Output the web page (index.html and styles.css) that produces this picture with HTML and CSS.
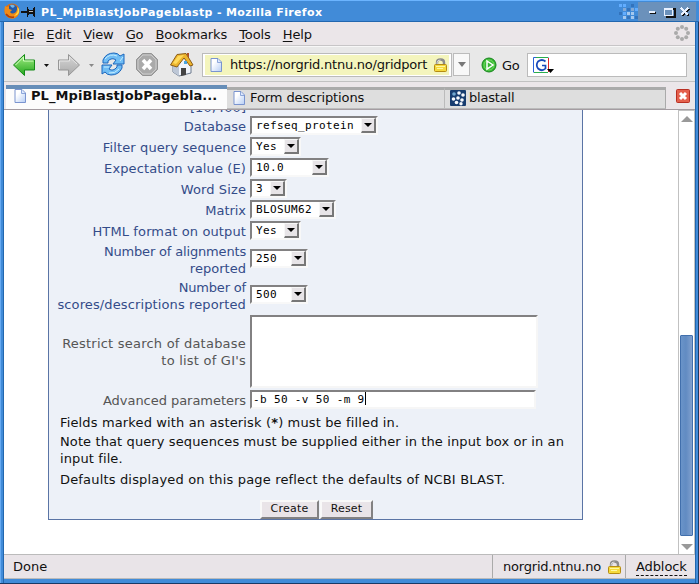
FILE: index.html
```html
<!DOCTYPE html>
<html lang="en">
<head>
<meta charset="utf-8">
<title>PL_MpiBlastJobPageblastp - Mozilla Firefox</title>
<link rel="stylesheet" href="styles.css">
</head>
<body>
<svg width="0" height="0" class="defs">
  <defs>
    <linearGradient id="green" x2="0" y2="1"><stop stop-color="#a5ee86"/><stop offset="1" stop-color="#22a51c"/></linearGradient>
    <linearGradient id="grey" x2="0" y2="1"><stop stop-color="#d6d6d6"/><stop offset="1" stop-color="#aaa"/></linearGradient>
    <linearGradient id="sheet" x2="1" y2="1"><stop offset=".3" stop-color="#fff"/><stop offset="1" stop-color="#b5cdf5"/></linearGradient>
    <symbol id="page" viewBox="0 0 12 14"><path d="M1 .5H8L11.5 4V13.5H1Z" fill="url(#sheet)" stroke="#7a94cf"/><path d="M7.5 1V4.5H11" fill="#dce8ff" stroke="#8da7da"/></symbol>
    <symbol id="lock" viewBox="0 0 13 14"><path d="M3 7V4.5Q3 1.5 6.5 1.5T10 4.5V7" fill="none" stroke="#8c8c8c" stroke-width="2.4"/><path d="M3.2 6V4.5Q3.2 2 6.5 2" fill="none" stroke="#ddd"/><rect x=".5" y="6.5" width="12" height="7" rx="1" fill="#f5da3c" stroke="#b58b12"/><path d="M2 8.500H11M3 10.500H9" stroke="#fff8a0"/></symbol>
  </defs>
</svg>
<div class="window">
  <header class="titlebar">
    <svg class="fox" width="16" height="16" viewBox="0 0 16 16"><circle cx="8" cy="8" r="7.500" fill="#e36e0c"/><circle cx="8.500" cy="6.500" r="5" fill="#245aa9"/><path d="M6 2Q9 1 11 3L9 5 7 4Z" fill="#72b5e8"/><path d="M1 3L3 4 5 3 5 6 8 7 6 9Q8 12 12 9L14 4Q17 11 11 15 5 17 1 11Q0 7 1 3" fill="#f28b16"/><path d="M13 4Q15 8 12 11L10 13Q16 12 15 6Z" fill="#ffdc45"/><path d="M2 11Q5 15 10 14" fill="none" stroke="#ae3e0b" stroke-width="1.500"/></svg>
    <svg class="pin" width="14" height="10" viewBox="0 0 14 10" shape-rendering="crispEdges"><path d="M0 4H6V6H0ZM6 0H7V10H6ZM7 2H8V8H7ZM8 3H12V7H8ZM12 1H13V9H12ZM13 0H14V10H13Z" fill="#111"/><path d="M8 4H12V5H8" fill="#bbb"/></svg>
    <span class="title">PL_MpiBlastJobPageblastp - Mozilla Firefox</span>
    <svg class="controls" width="80" height="20" viewBox="0 0 80 20" shape-rendering="crispEdges"><path d="M22 1H80V20H22Z" fill="#6b91bb"/><path d="M3 3h3v3h-3zM7 3h3v3h-3zM7 11h3v3h-3zM19 7h3v3h-3z" fill="#62adff"/><path d="M11 7h3v3h-3zM15 3h3v3h-3zM11 15h3v3h-3zM3 11h3v3h-3zM19 15h3v3h-3z" fill="#3373bc"/><path d="M7 15h3v3h-3zM11 11h3v3h-3zM15 11h3v3h-3zM15 15h3v3h-3z" fill="#a5c8ee"/><path d="M7 7h3v3h-3zM15 7h3v3h-3z" fill="#84a9d5"/><path d="M34 12H40M50 8H59V16H50" fill="none" stroke="#111" stroke-width="2"/><path d="M33 11H39" stroke="#e8f1ff" stroke-width="2"/><path d="M48.500 7.500H56.500V14.500H48.500ZM48 8.500H57" fill="none" stroke="#e8f1ff"/><path d="M66 8L73 15M73 8L66 15" fill="none" stroke="#111" stroke-width="2"/><path d="M65 7L72 14M72 7L65 14" fill="none" stroke="#e8f1ff" stroke-width="2"/></svg>
  </header>
  <nav class="menu">
    <span><u>F</u>ile</span><span><u>E</u>dit</span><span><u>V</u>iew</span><span><u>G</u>o</span><span><u>B</u>ookmarks</span><span><u>T</u>ools</span><span><u>H</u>elp</span>
    <svg class="throbber" width="18" height="18" viewBox="0 0 18 18"><g fill="#aaa"><circle cx="9" cy="3" r="2"/><circle cx="13.200" cy="4.800" r="2"/><circle cx="15" cy="9" r="2"/><circle cx="13.200" cy="13.200" r="2"/><circle cx="9" cy="15" r="2"/><circle cx="4.800" cy="13.200" r="2"/><circle cx="3" cy="9" r="2"/><circle cx="4.800" cy="4.800" r="2"/></g></svg>
  </nav>
  <div class="toolbar">
    <svg class="icons" width="198" height="36" viewBox="4 46 198 36">
      <path d="M13.500 65L24.500 54.500V60H34.500V70H24.500V75.500Z" fill="url(#green)" stroke="#168b18"/><path d="M15.500 65L23.500 57V61H33.500" fill="none" stroke="#d4ffc2"/>
      <path d="M44 64H49L46.500 67Z" fill="#111"/>
      <path d="M79.500 65L68.500 54.500V60H58.500V70H68.500V75.500Z" fill="url(#grey)" stroke="#969696"/><path d="M59.500 69V61H69.500V57L77 64" fill="none" stroke="#e5e5e5"/>
      <path d="M89 64H94L91.500 67Z" fill="#888"/>
      <path d="M103 63V60Q106 53 114 53Q118 53 120 56L124 54V64H113L116 60Q112 57 108 61V63Z" fill="#70bdf4" stroke="#1c67bd"/><path d="M122 65V68Q119 75 111 75Q107 75 105 72L102 74V65H112L109 69Q113 72 117 67V65Z" fill="#70bdf4" stroke="#1c67bd"/><path d="M105 59Q110 53 117 56M120 61L123 57M104 67H109M109 73Q115 74 119 69" fill="none" stroke="#c7edff"/>
      <path d="M142.500 53.500H151.500L157.500 59.500V69.500L151.500 75.500H142.500L136.500 69.500V59.500Z" fill="#aaa" stroke="#939393"/><path d="M143 55H151L156 60V69L151 74H143L138 69V60Z" fill="none" stroke="#ccc"/><path d="M143 60L151 69M151 60L143 69" stroke="#fff" stroke-width="3.500"/>
      <path d="M173 64L183 56 191 65V73L179 76 173 72Z" fill="#f1f5fc" stroke="#6b788c"/><path d="M173 64L179 66V76L173 72Z" fill="#bdc7d6"/><path d="M170.500 65L177 54.500 186 53.500 193 65 190 66 184 58 177 67Z" fill="#edb52d" stroke="#8b5c17"/><path d="M173 63L178 56 184 55 176 64Z" fill="#ffdb5e"/><path d="M181 68H186V75L181 76Z" fill="#444"/><path d="M184 61H187V64H184Z" fill="#4aa5e0"/><path d="M187 55V53H189V58Z" fill="#af5225"/>
    </svg>
    <div class="address"><div class="url"><svg width="12" height="14"><use href="#page"/></svg><span>https://norgrid.ntnu.no/gridport</span><svg class="urllock" width="13" height="14"><use href="#lock"/></svg></div></div>
    <div class="drop"><i></i></div>
    <svg class="goicon" width="16" height="16" viewBox="0 0 16 16"><circle cx="8" cy="8" r="7" fill="#38b936" stroke="#16851b"/><circle cx="8" cy="8" r="5" fill="none" stroke="#75da60"/><path d="M6 4L12 8 6 12Z" fill="#38b936" stroke="#fff" stroke-width="1.500"/></svg>
    <span class="go">Go</span>
    <div class="search"><svg width="22" height="17" viewBox="0 0 22 17"><path d="M.5 15.500V.5H15.500" fill="none" stroke="#2b62d7"/><path d="M3 .5H15M1 15.500H15" stroke="#2bad4d"/><path d="M15.500 1V15" stroke="#e02626"/><path d="M12.500 4.500Q9 1.500 5 4.500 2.500 8 5 11.500 9 15 12.500 11.500V8.500H9" fill="none" stroke="#1849ba" stroke-width="1.700"/><path d="M14 12H21L17.500 16Z" fill="#000"/></svg></div>
  </div>
  <div class="tabs">
    <div class="tab active"><svg width="12" height="14"><use href="#page"/></svg><b>PL_MpiBlastJobPagebla...</b></div>
    <div class="tab forms"><svg width="12" height="14"><use href="#page"/></svg><span>Form descriptions</span></div>
    <div class="tab blast"><svg width="16" height="16" viewBox="0 0 16 16"><rect width="16" height="16" rx="1" fill="#173d70"/><g fill="#f6f9fd"><circle cx="9" cy="3" r="1.800"/><circle cx="13" cy="5" r="1.800"/><circle cx="3.500" cy="9" r="1.800"/><circle cx="8" cy="8" r="1.800"/><circle cx="12" cy="10" r="1.800"/><circle cx="6.500" cy="12.500" r="1.800"/><circle cx="11" cy="13.800" r="1.700"/></g><circle cx="4" cy="4" r="1.800" fill="#71a8cf"/></svg><span>blastall</span></div>
    <svg class="close" width="14" height="14" viewBox="0 0 14 14"><rect x=".5" y=".5" width="13" height="13" rx="1" fill="#e45f4c" stroke="#b92e22"/><path d="M4 4L10 10M10 4L4 10" stroke="#fff" stroke-width="3"/></svg>
  </div>
  <main class="content">
    <section class="panel">
      <div class="range"><span>[10,400]</span></div>
      <div class="row"><label class="s0">Database</label><div class="select w128">refseq_protein<i></i></div></div>
      <div class="row"><label class="s1">Filter query sequence</label><div class="select w50">Yes<i></i></div></div>
      <div class="row"><label class="s1">Expectation value (E)</label><div class="select w79">10.0<i></i></div></div>
      <div class="row"><label class="s1">Word Size</label><div class="select w37">3<i></i></div></div>
      <div class="row"><label class="s2">Matrix</label><div class="select w86">BLOSUM62<i></i></div></div>
      <div class="row"><label class="s1">HTML format on output</label><div class="select w50">Yes<i></i></div></div>
      <div class="row double"><label><span class="s3">Number of alignments</span><br><span class="s0">reported</span></label><div class="select w58">250<i></i></div></div>
      <div class="row double"><label><span class="s3">Number of</span><br><span class="s1">scores/descriptions reported</span></label><div class="select w58">500<i></i></div></div>
      <div class="row area optional"><label><span class="s4">Restrict search of database</span><br><span class="s4">to list of GI's</span></label><div class="textarea"></div></div>
      <div class="row advanced optional"><label class="s2">Advanced parameters</label><div class="input">-b 50 -v 50 -m 9<em></em></div></div>
      <p class="fields">Fields marked with an asterisk (<b>*</b>) must be filled in.</p>
      <p class="note">Note that query sequences must be supplied either in the input box or in an<br>input file.</p>
      <p class="defaults">Defaults displayed on this page reflect the defaults of NCBI BLAST.</p>
      <div class="buttons"><div class="button create">Create</div><div class="button reset">Reset</div></div>
    </section>
    <aside class="scroll"><i class="up"></i><div class="thumb"></div><i class="down"></i></aside>
  </main>
  <footer><span class="done">Done</span><div class="host"><span>norgrid.ntnu.no</span><svg width="13" height="14"><use href="#lock"/></svg></div><div class="adblock"><span>Adblock</span></div></footer>
</div>
</body>
</html>
```
FILE: styles.css
```css
* { box-sizing: border-box; }
body { margin: 0; width: 699px; height: 584px; overflow: hidden; font: 13px/17px "DejaVu Sans", sans-serif; color: #111; }
.defs { position: absolute; }
svg { display: block; flex: none; }
.window { height: 584px; padding: 0 4px 5px; border: 0; background: linear-gradient(90deg, #66aaf2 0 1px, #418bd8 1px 3px, #2267af 3px 4px, #418bd8 4px 695px, #2267af 695px 696px, #418bd8 696px 698px, #193965 698px); display: flex; flex-direction: column; box-shadow: inset 0 -1px #193965; }
.titlebar { height: 22px; margin: 0 -4px; padding-left: 4px; display: flex; align-items: center; flex: none; background: #418bd8; border-top: 1px solid #6bb4ff; border-bottom: 1px solid #2267af; color: #fff; }
.pin { margin: 2px 0 0 1px; }
.title { font-size: 11px; font-weight: bold; margin: 3px 0 0 6px; letter-spacing: .35px; white-space: nowrap; }
.controls { margin-left: auto; margin-right: 3px; }
.menu { height: 24px; flex: none; display: flex; align-items: center; gap: 12px; padding-left: 9px; padding-top: 1px; background: #ebe6e9; border-bottom: 1px solid #c7c5c7; letter-spacing: -.1px; }
.menu u { text-underline-offset: 2px; }
.throbber { margin: -2px 4px 0 auto; }
.toolbar { height: 36px; flex: none; display: flex; align-items: center; background: #e8e8e8; border-bottom: 1px solid #c1c1c1; border-top: 1px solid #f7f7f7; }
.address { width: 250px; height: 24px; flex: none; border: 1px solid #bbb; background: white; padding: 1px 2px; margin-top: 1px; }
.url { height: 20px; background: #f4f5bd; display: flex; align-items: center; padding: 0 2px 0 5px; }
.url span { margin-left: 8px; white-space: nowrap; letter-spacing: -.22px; width: 198px; }
.urllock { margin-left: auto; }
.drop { width: 17px; height: 23px; border: 1px solid #bbb; background: #f8f8f8; margin: 1px 0 0 1px; display: grid; place-items: center; }
.drop i { border: 4.500px solid transparent; border-top: 5px solid #777; border-bottom: 0; }
.goicon { margin-left: 11px; margin-top: 2px; }
.go { margin-left: 5px; margin-top: 2px; letter-spacing: -.3px; }
.search { margin: 1px 8px 0 auto; width: 160px; height: 24px; background: white; border: 1px solid #bbb; padding: 3px 5px; }
.tabs { height: 28px; flex: none; background: #ebe6e9; border-bottom: 1px solid #a49ca1; padding: 3px 0 0 2px; display: flex; }
.tab { display: flex; align-items: center; white-space: nowrap; border-bottom: 1px solid #bbb; background: #dedede; height: 22px; }
.active { width: 221px; height: 24px; border: 0; border-top: 4px solid #668db8; background: #fcfcfc; padding-left: 8px; }
.active svg { margin-top: -4px; }
.active b { margin-left: 5px; font-size: 13px; margin-top: -7px; letter-spacing: .07px; }
.forms, .blast { margin-top: 2px; border-top: 3px solid #aaa; padding-left: 6px; }
.tab svg { position: relative; top: -1px; }
.forms { width: 218px; border-right: 1px solid #bbb; }
.forms span { margin: -4px 0 0 5px; letter-spacing: -.1px; }
.blast { width: 221px; padding-left: 5px; border-right: 1px solid #aaa; }
.blast span { margin: -4px 0 0 3px; letter-spacing: -.2px; }
.close { margin: 4px 0 0 10px; }
.content { height: 444px; flex: none; background: white; display: flex; overflow: hidden; }
.panel { width: 535px; height: 410px; margin-left: 44px; border: 1px solid #5a74a5; border-top: 0; background: #edf1f8; letter-spacing: .4px; }
.range { height: 6px; width: 197px; overflow: hidden; color: #344c89; display: flex; align-items: flex-end; justify-content: flex-end; letter-spacing: .05px; }
.row { height: 21px; display: grid; grid-template-columns: 197px auto; column-gap: 4px; align-items: start; color: #344c89; }
.row label { text-align: right; white-space: nowrap; padding-top: 2px; }
.row .s0 { letter-spacing: .03px; }
.row .s1 { letter-spacing: .12px; }
.row .s2 { letter-spacing: -.04px; }
.row .s3 { letter-spacing: -.17px; }
.row .s4 { letter-spacing: .22px; }
.select { height: 19px; border: 2px solid #828182; border-right-color: #f8f8f8; border-bottom-color: #f8f8f8; background: white; color: #000; font: 11px/15px "DejaVu Sans Mono", monospace; letter-spacing: .38px; padding-left: 4px; position: relative; }
.select i { position: absolute; top: 0; right: 0; width: 15px; height: 15px; background: #e7e4e7; border: 1px solid #f7f7f7; border-right: 2px solid #777; border-bottom: 2px solid #777; }
.select i::after { content: ""; position: absolute; left: 2px; top: 4px; border: 4px solid transparent; border-top: 4px solid #000; border-bottom: 0; }
.w128 { width: 128px; }
.w50 { width: 51px; }
.w79 { width: 79px; }
.w37 { width: 37px; }
.w86 { width: 86px; }
.w58 { width: 58px; }
.double { height: 36px; }
.double label { padding-top: 1px; }
.double .select { margin-top: 7px; }
.area { height: 75px; margin-top: 1px; }
.area label { padding-top: 20px; }
.optional { color: #555; }
.textarea { width: 288px; height: 73px; border: 2px solid #828182; border-right-color: #f6f6f6; border-bottom-color: #f6f6f6; background: white; }
.advanced { height: 23px; }
.input { width: 286px; height: 19px; border: 2px solid #828182; border-right-color: #f6f6f6; border-bottom-color: #f6f6f6; background: white; color: #000; font: 11px/15px "DejaVu Sans Mono", monospace; letter-spacing: .35px; padding-left: 1px; display: flex; }
.input em { width: 1px; height: 13px; background: #000; }
.panel p { margin: 0 0 0 11px; white-space: nowrap; padding-top: 2px; }
.panel .fields { padding-top: 1px; letter-spacing: .14px; }
.panel .note { letter-spacing: .11px; }
.panel .defaults { padding-top: 4px; letter-spacing: .17px; }
.buttons { display: flex; gap: 1px; margin: 12px 0 0 211px; }
.button { height: 19px; background: #e9e4e8; border: 2px solid #f9f9f9; border-right-color: #828182; border-bottom-color: #828182; font-size: 11px; line-height: 14px; text-align: center; letter-spacing: .2px; }
.create { width: 59px; }
.reset { width: 53px; }
.scroll { width: 17px; height: 444px; margin-left: auto; border: 1px solid #c1c1c1; border-bottom: 0; display: flex; flex-direction: column; align-items: center; }
.up { margin-top: 5px; border: 6px solid transparent; border-bottom: 6px solid #999; border-top: 0; }
.thumb { width: 13px; height: 201px; margin-top: 213px; border: 1px solid #416fac; border-radius: 1px; background: linear-gradient(90deg, #6a94c9, #618bc2 45%, #80a0ce); }
.down { margin-top: 8px; border: 6px solid transparent; border-top: 6px solid #999; border-bottom: 0; }
footer { height: 25px; flex: none; display: flex; background: #e9e4e8; border-top: 1px solid #bbb; border-bottom: 1px solid #bbb; align-items: center; }
.done { padding-left: 9px; }
.host { margin-left: auto; width: 133px; border-left: 1px solid #aaa; height: 23px; display: flex; align-items: center; padding-left: 10px; }
.host span { letter-spacing: -.2px; }
.host svg { margin-left: 7px; }
.adblock { width: 70px; height: 23px; border-left: 1px solid #aaa; padding: 3px 0 0 10px; }
.adblock span { display: inline-block; border-bottom: 1px dashed #111; height: 18px; letter-spacing: -.1px; }
```
